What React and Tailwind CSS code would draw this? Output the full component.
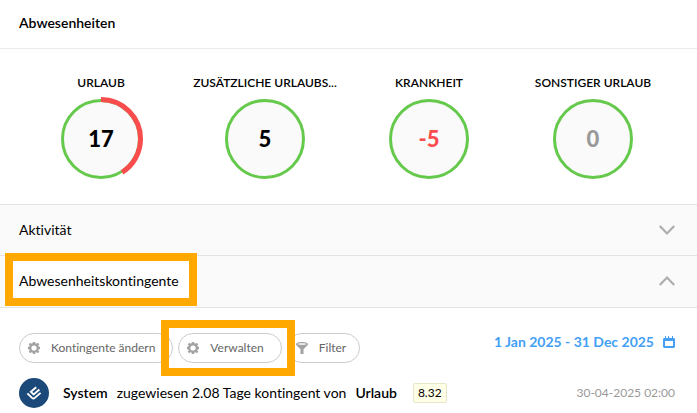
import { useState } from 'react';
import clsx from 'clsx';

const quotas = [
  { label: 'Urlaub', value: 17, used: 41 },
  { label: 'Zusätzliche Urlaubs...', value: 5 },
  { label: 'Krankheit', value: -5, tone: 'text-[#f94d4d]' },
  { label: 'Sonstiger Urlaub', value: 0, tone: 'text-[#999]' },
];

function QuotaRing({ label, value, used = 0, tone = 'text-black' }) {
  return (
    <div className="flex flex-col items-center gap-2">
      <p className="text-xs leading-4 font-semibold whitespace-nowrap uppercase">{label}</p>
      <div className="relative flex h-20 w-20 items-center justify-center">
        <svg viewBox="0 0 80 80" className="absolute inset-0 h-20 w-20 overflow-visible" aria-hidden="true">
          <circle cx="40" cy="40" r="38.5" fill="#fafafa" stroke="#65c94b" strokeWidth="3" />
          {used > 0 && (
            <circle
              cx="40"
              cy="40"
              r="39.5"
              fill="none"
              stroke="#f94d4d"
              strokeWidth="5"
              pathLength="100"
              strokeDasharray={`${used} 100`}
              transform="rotate(-90 40 40)"
            />
          )}
        </svg>
        <span className={clsx('relative text-[22px] font-black', tone)}>{value}</span>
      </div>
    </div>
  );
}

function Chevron({ open }) {
  return (
    <svg viewBox="0 0 16 10" className="h-[10px] w-4" fill="none" stroke="#adadad" strokeWidth="2.2" aria-hidden="true">
      <path d={open ? 'M0.8 9 8 1.6 15.2 9' : 'M0.8 1 8 8.4 15.2 1'} />
    </svg>
  );
}

function GearIcon() {
  return (
    <svg viewBox="0 0 12 12" className="h-3 w-3 shrink-0" fill="none" stroke="#a3a3a3" aria-hidden="true">
      <circle cx="6" cy="6" r="3.8" strokeWidth="2.4" />
      <path
        d="M6 0v2M6 10v2M0 6h2M10 6h2M1.5 1.5l1.6 1.6M8.9 8.9l1.6 1.6M1.5 10.5l1.6-1.6M8.9 3.1l1.6-1.6"
        strokeWidth="2.4"
      />
    </svg>
  );
}

function FunnelIcon() {
  return (
    <svg viewBox="0 0 12 12" className="h-3 w-3 shrink-0" aria-hidden="true">
      <path d="M0 2.2C0 .9 2.7 0 6 0s6 .9 6 2.2c0 .6-.4 1-1 1.500L7.500 7.200V12h-3V7.200L1 3.700C.4 3.200 0 2.800 0 2.200Z" fill="#a3a3a3" />
      <ellipse cx="6" cy="2" rx="4.500" ry="0.800" fill="#fff" />
    </svg>
  );
}

function CalendarIcon() {
  return (
    <svg viewBox="0 0 12 12" className="h-3 w-3" fill="none" stroke="#449ff5" aria-hidden="true">
      <rect x="1" y="3" width="10" height="8" rx="0.4" strokeWidth="2" />
      <path d="M0.5 4h11" strokeWidth="2" />
      <path d="M2.5 0v3M5.5 0v3M9.5 0v3" strokeWidth="1" />
    </svg>
  );
}

function PillButton({ icon: Icon, children, className }) {
  return (
    <button
      type="button"
      className={clsx('flex h-[30px] items-center gap-[11px] rounded-full border border-[#ccc] pl-2 text-xs whitespace-nowrap text-[#666]', className)}
    >
      <Icon />
      {children}
    </button>
  );
}

export default function App() {
  const [activityOpen, setActivityOpen] = useState(false);
  const [quotasOpen, setQuotasOpen] = useState(true);

  return (
    <main className="bg-white font-['Lato',sans-serif] text-sm text-black [font-variant-ligatures:none]">
      <header className="border-b border-[#ebebeb] pt-[13px] pr-[22px] pb-[15px] pl-[19px]">
        <h1 className="leading-5 font-semibold">Abwesenheiten</h1>
      </header>

      <section className="grid grid-cols-4 border-b border-[#e3e3e3] pt-[26px] pr-[22px] pb-[25px] pl-[19px]">
        {quotas.map((quota) => (
          <QuotaRing key={quota.label} {...quota} />
        ))}
      </section>

      <button
        type="button"
        aria-expanded={activityOpen}
        onClick={() => setActivityOpen(!activityOpen)}
        className="flex h-[51px] w-full items-center justify-between border-b border-[#e3e3e3] bg-[#fafafa] pr-[22px] pl-[19px]"
      >
        Aktivität
        <Chevron open={activityOpen} />
      </button>
      <button
        type="button"
        aria-expanded={quotasOpen}
        onClick={() => setQuotasOpen(!quotasOpen)}
        className="flex h-[52px] w-full items-center justify-between border-b border-[#e3e3e3] bg-[#fafafa] pr-[22px] pb-[2px] pl-[19px]"
      >
        <span className="relative isolate">
          <span className="absolute -top-[18px] -right-[18px] -bottom-[15px] -left-[14px] -z-10 border-8 border-[#ffa800] bg-white" />
          Abwesenheitskontingente
        </span>
        <Chevron open={quotasOpen} />
      </button>

      {quotasOpen && (
        <section className="pt-[25px] pr-[22px] pl-[19px]">
          <div className="flex items-start justify-between">
            <div className="flex gap-[5px]">
              <PillButton icon={GearIcon} className="pr-[17px]">
                Kontingente ändern
              </PillButton>
              <div className="relative z-10">
                <PillButton icon={GearIcon} className="pr-[17px]">
                  Verwalten
                </PillButton>
                <span className="pointer-events-none absolute -inset-y-[13px] -right-[13px] -left-[17px] border-8 border-[#ffa800]" />
              </div>
              <PillButton icon={FunnelIcon} className="pr-[13px]">
                Filter
              </PillButton>
            </div>
            <button type="button" className="flex h-[18px] items-center gap-[9px] font-bold whitespace-nowrap text-[#449ff5]">
              1 Jan 2025 - 31 Dec 2025
              <CalendarIcon />
            </button>
          </div>

          <div className="flex items-center pt-[15px] whitespace-nowrap">
            <span className="flex h-[30px] w-[30px] items-center justify-center rounded-full bg-[#1b4a7a]">
              <svg viewBox="0 0 16 16" className="h-4 w-4" fill="none" stroke="#fff" strokeWidth="1.9" aria-hidden="true">
                <path d="M1.4 8.4 6 12.9Q7.4 14.1 8.8 12.9L14.6 7.900" />
                <path d="M10.200 2.200 4.900 6.900 7.600 9.500 13.400 4.500" />
              </svg>
            </span>
            <p className="flex gap-[9px] pl-[14px]">
              <b className="font-semibold">System</b>
              <span>zugewiesen 2.08 Tage kontingent von</span>
              <b className="font-semibold">Urlaub</b>
            </p>
            <span className="ml-4 flex h-5 items-center rounded-xs border border-[#e6e6c8] bg-[#ffffe8] px-1 text-xs">8.32</span>
            <time dateTime="2025-04-30T02:00" className="ml-auto text-xs text-[#999]">
              30-04-2025 02:00
            </time>
          </div>
        </section>
      )}
    </main>
  );
}
